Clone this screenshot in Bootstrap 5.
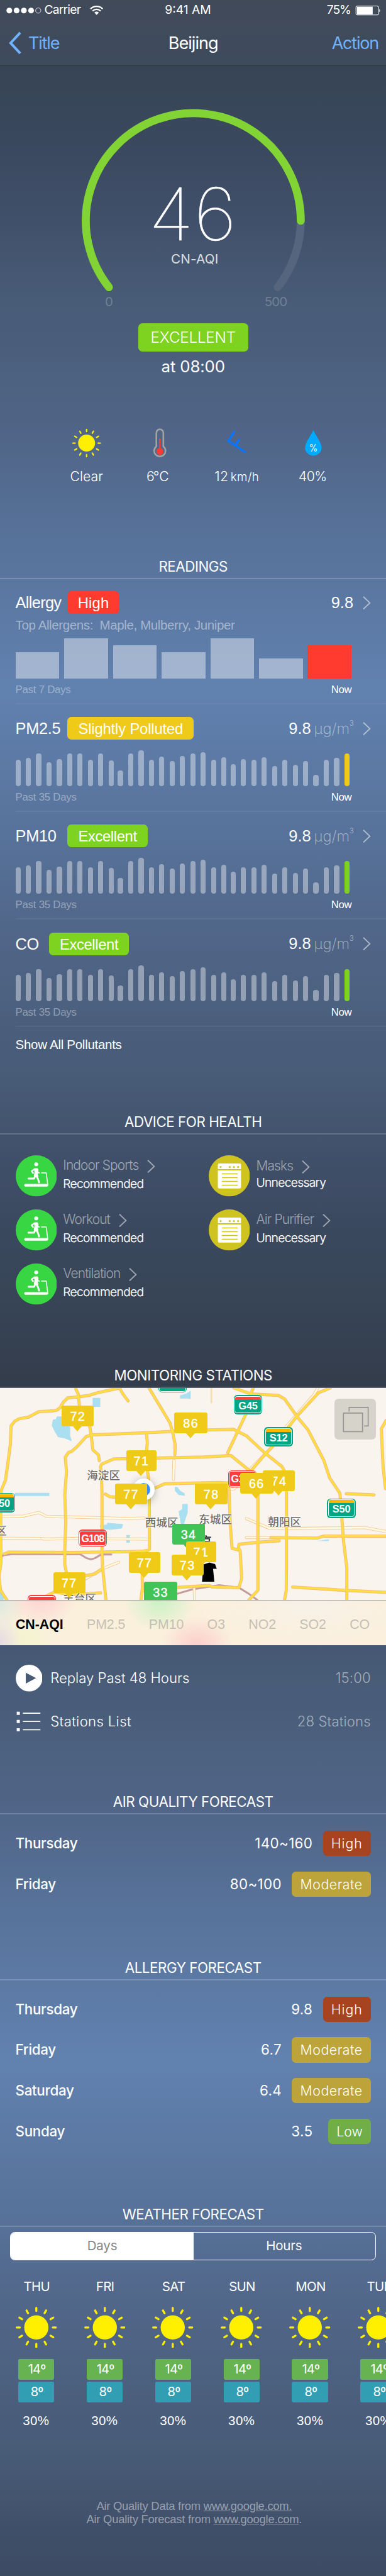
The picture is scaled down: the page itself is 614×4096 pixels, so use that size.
<!DOCTYPE html>
<html lang="en">
<head>
<meta charset="utf-8">
<meta name="viewport" content="width=device-width, initial-scale=1">
<title>Beijing air quality</title>
<link href="https://cdn.jsdelivr.net/npm/bootstrap@5.3.0/dist/css/bootstrap.min.css" rel="stylesheet">
<style>
/* 1rem = 10 design pixels */
html{font-size:8.192px}
body{margin:0;overflow-x:hidden;color:#fff;font-family:"Inter","Noto Sans CJK SC",sans-serif;font-weight:400;line-height:1;
 background:linear-gradient(#343d4c 0,#374455 13rem,#3b4960 30rem,#41506a 43rem,#475a75 56rem,#506587 84rem,#59759e 110rem,#6181af 133.5rem,#59759e 157.5rem,#506587 183rem,#475a75 211rem,#41506a 224rem,#3b4960 237rem,#374455 254rem,#343d4c 267rem,#343d4c 269rem,#3b4960 297rem,#41506a 310rem,#475a75 323rem,#506587 351rem,#59759e 375rem,#6181af 400rem,#59759e 424rem,#506587 450rem,#475a75 478rem,#41506a 490rem,#3c4b62 500rem)}
.screen{width:75rem;min-height:4096px;overflow:hidden}
svg{display:block;flex:none}
.helv{font-family:"Liberation Sans",Arial,sans-serif}
.topbar{height:12.8rem;background:linear-gradient(#414a59,#3e4b5d);border-bottom:.15rem solid #2c3743}
.status{height:4.2rem;line-height:3.85rem;font-size:2.35rem}
.status .carrier{letter-spacing:-.04em}
.status .pct{letter-spacing:-.055em}
.navrow{height:8.45rem;line-height:8.6rem;font-size:3.3rem;letter-spacing:-.044em}
.navrow a{color:#6fb2ff;text-decoration:none}
.rating{width:21.4rem;height:5.4rem;line-height:5.5rem;border-radius:.8rem;background:#7ed321;font-size:2.95rem;font-weight:300;letter-spacing:-.008em;margin-top:2rem;padding:0}
.at-time{height:5.9rem;line-height:5.9rem;font-size:3.15rem;letter-spacing:-.006em}
.now-grid{display:grid;grid-template-columns:13.7rem 13.7rem 17.3rem 12.1rem;padding-left:9.95rem;margin-top:8.9rem}
.now-grid svg{width:8rem;height:6rem;margin:0 auto 1.5rem}
.now-grid div{height:4rem;line-height:4rem;font-size:2.6rem;font-weight:300;white-space:nowrap}
.now-grid .unit-s{font-size:2.3rem;letter-spacing:.02em;margin-left:-.35rem}
/* the rules are painted at the bottom edge so that their height stays fractional */
.sec-title{height:4.6rem;line-height:4.4rem;font-size:2.73rem;font-weight:400;letter-spacing:-.021em;margin:0;text-align:center;background:linear-gradient(rgba(255,255,255,.2),rgba(255,255,255,.2)) 0 100%/100% .22rem no-repeat}
.reading{margin-left:3rem;padding:2.5rem 3rem .6rem 0;background:linear-gradient(rgba(255,255,255,.06),rgba(255,255,255,.06)) 0 100%/100% .22rem no-repeat;font-family:"Liberation Sans",Arial,sans-serif}
.reading.first{padding-top:2.4rem}
.r-head{height:4.4rem;line-height:4.4rem;font-size:3.1rem}
.r-name{width:10.1rem;letter-spacing:-.012em}
.r-name.tight{letter-spacing:-.027em}
.r-name.short{width:6.5rem}
.lvl{height:4.4rem;line-height:4.6rem;font-size:2.9rem;font-weight:400;padding:0 2.1rem;border-radius:.8rem;letter-spacing:-.006em}
.lvl.red{background:#ff3b30;padding:0 2rem;letter-spacing:.011em}.lvl.yel{background:#f0ca18}.lvl.grn{background:#7ed321;letter-spacing:-.015em}
.r-unit{font-family:Inter,sans-serif;font-weight:200;font-size:2.9rem;color:rgba(255,255,255,.5);margin-left:.6rem}
.r-unit sup{font-size:1.35rem;font-weight:300;vertical-align:1.6rem;line-height:0;position:static}
.chev{width:1.6rem;height:2.6rem;fill:none;stroke:rgba(255,255,255,.5);stroke-width:2.4}
.allergens{height:2.9rem;line-height:2.9rem;margin-top:.7rem;font-size:2.5rem;letter-spacing:-.018em;color:rgba(255,255,255,.46);white-space:pre}
.week-bars{height:8.9rem;gap:.96rem}
.week-bars i{width:8.5rem;background:rgba(255,255,255,.42)}
.week-bars i.now{background:#ff3b30}
.month-bars{height:9rem;gap:1.01rem}
.month-bars i{width:1rem;border-radius:.5rem;background:rgba(255,255,255,.4)}
.month-bars i.near{margin-left:-.2rem}
.month-bars i.yel{background:#f0ca18}.month-bars i.grn{background:#7ed321}
.r-foot{height:4.4rem;line-height:4.4rem;font-size:2.05rem;letter-spacing:-.014em;width:65.3rem}
.r-foot span:first-child{color:rgba(255,255,255,.4)}
.show-all{height:6.8rem;line-height:6.8rem;padding-left:3rem;font-size:2.5rem;letter-spacing:-.013em;margin-bottom:9.4rem}
.advice{padding:4.1rem 0 0 3rem;margin-bottom:9rem}
.advice .item{height:8rem;margin-bottom:2.5rem}
.advice .icon{width:8rem;height:8rem;margin-right:1.25rem}
.adv-name{height:3.7rem;line-height:3.7rem;font-size:2.55rem;font-weight:300;letter-spacing:-.041em;color:rgba(255,255,255,.5);margin-top:.1rem}
.adv-name .chev{margin-left:1.7rem;margin-top:.3rem}
.adv-sub{height:3.5rem;line-height:3.5rem;font-size:2.35rem;font-weight:300;-webkit-text-stroke:.03rem #fff;letter-spacing:-.036em}
.tight-lines .adv-name{margin-top:.4rem;height:3.4rem;line-height:3.4rem}
.tight-lines .adv-sub{height:3.1rem;line-height:3.1rem}
.map{height:41.2rem;background:#f9f5ee;overflow:hidden}
.map svg.roads{width:75rem;height:41.2rem}
.roads path{fill:none;vector-effect:non-scaling-stroke;stroke-linejoin:round;stroke-linecap:round}
.roads .area path,.roads path.area{fill:inherit}
.roads .edge{stroke:#f5bc80;stroke-width:5px}.roads .core{stroke:#ffde3f;stroke-width:3.1px}
.roads .edge2{stroke:#f4c796;stroke-width:4.6px}.roads .core2{stroke:#fffbe0;stroke-width:2.8px}
.pin{position:absolute;height:4.03rem;border-radius:.4rem;background:#f0ca18;font:400 2.4rem/4.3rem "Liberation Sans",sans-serif;-webkit-text-stroke:.05rem #fff;letter-spacing:.07em;text-align:center}
.pin::after{content:"";position:absolute;left:50%;top:4rem;margin-left:-.95rem;border:.95rem solid transparent;border-top:1rem solid #f0ca18;border-bottom:0}
.pin.ok{background:#40c456}.pin.ok::after{border-top-color:#40c456}
.shield{position:absolute;width:5.55rem;height:3.75rem;border-radius:.7rem;background:#00a584;padding:.18rem}
.shield b{display:block;height:100%;border:.2rem solid #fff;border-radius:.55rem;background:linear-gradient(#ffb400 .6rem,#00a584 .6rem);font:700 2rem/3.5rem "Liberation Sans",sans-serif;text-align:center;white-space:nowrap;letter-spacing:-.01em}
.shield.g b{background:linear-gradient(#ff4438 .6rem,#00a584 .6rem)}
.shield.n{background:#ff3b3b;height:3.35rem}.shield.n b{background:#ff3b3b;line-height:2.75rem;letter-spacing:-.06em}
.place{position:absolute;font:500 2.15rem/2.2rem "Noto Sans CJK SC",sans-serif;color:#716d69;white-space:nowrap;text-shadow:0 0 .2rem #fff,0 0 .2rem #fff,0 0 .3rem #fff}
.place.city{color:#222}
.locator{position:absolute;left:25.7rem;top:17.6rem;width:4.3rem;height:4.3rem;border-radius:50%;background:#3a8ef5;border:.95rem solid #fff;box-shadow:0 .3rem 1.6rem rgba(0,0,0,.3)}
.layers{position:absolute;left:65rem;top:2.1rem;width:8rem;height:8rem;border-radius:.8rem;background:#d6d3cb}
.map-tabs{height:8.8rem;line-height:9.5rem;padding:0 3.2rem 0 3.05rem;border-top:.1rem solid #a5a29b;font-size:2.6rem;color:#c6c0b3;background:
 radial-gradient(7rem 6rem at 8rem -1rem,#fdd0d3,transparent),radial-gradient(7rem 6rem at 31rem 0,#c9f2c4,transparent),radial-gradient(7rem 6rem at 38.3rem 9rem,#fccbcb,transparent),radial-gradient(5rem 6rem at 0 0,#dde9e0,transparent),radial-gradient(4rem 5rem at 0 8rem,#e6dbe2,transparent),radial-gradient(5rem 5rem at 5rem 8rem,#f3f4cd,transparent),radial-gradient(22rem 9rem at 60rem 0,#f7f1e8,transparent),#fbf0dc}
.map-tabs .active{color:#000;font-weight:700}
.links{padding:2.2rem 3rem 0;margin-bottom:9.2rem}
.links .line{height:8.4rem;font-size:2.7rem;font-weight:300}
.links .line svg{width:5.2rem;height:5.2rem;margin-right:1.6rem}
.links .dim{color:rgba(255,255,255,.5);letter-spacing:.007em}
.fc{padding:1.7rem 3rem 0}
.fc .line{height:7.9rem;font-size:2.73rem}
.fc .day{font-weight:500;letter-spacing:-.014em}
.fc .num{letter-spacing:.017em;margin-right:2rem}
.fc .lo{margin-right:3rem}
.tag{height:4.9rem;line-height:5rem;border-radius:.8rem;font-size:2.6rem;font-weight:300;letter-spacing:.026em;padding:0 1.6rem;background:#bda43a}
.tag.hi{background:#a8431f;letter-spacing:.045em}.tag.low{background:#71ae48;letter-spacing:0}
.seg{width:71rem;height:5.5rem;margin:1rem 0 0 2rem;border:.2rem solid #fff;border-radius:.9rem;overflow:hidden}
.seg .btn{border:0;border-radius:0;padding:0;font-size:2.5rem;line-height:5rem;color:#fff;letter-spacing:-.01em;width:50%;background:none}
.seg .btn.active{background:#fff;color:#868686}
.days{margin:3.2rem 0 0 .35rem;width:100rem}
.days .day-col{width:13.3rem;flex:none;text-align:center;font-size:2.5rem}
.days .dname{height:4rem;line-height:4rem;letter-spacing:-.035em;padding-left:.2rem}
.days svg{width:8rem;height:8rem;margin:1.8rem auto 2.2rem}
.days .deg{width:7rem;height:4rem;line-height:4rem;margin:0 auto .4rem;border-radius:.3rem;background:#67b352;font-size:2.45rem;letter-spacing:-.04em;padding-left:.3rem}
.days .deg.cold{background:#319eb3}
.days .rain{height:4rem;line-height:4rem;margin-top:1.6rem;letter-spacing:.02em}
.credits{margin-top:13.2rem;font-size:2.25rem;line-height:2.6rem;letter-spacing:-.014em;text-align:center;color:rgba(255,255,255,.46);padding-left:.4rem}
.credits a{color:inherit;text-decoration:underline;text-underline-offset:.15rem}
</style>
</head>
<body>
<svg width="0" height="0" class="position-absolute">
 <defs>
  <symbol id="sun" viewBox="0 0 80 80"><circle cx="40" cy="40" r="23.5" fill="#fff000"/><g stroke="#fff000" stroke-width="4" stroke-linecap="round"><path d="M40 2v6M40 72v6M2 40h6M72 40h6"/><path d="M40 2v6M40 72v6M2 40h6M72 40h6" transform="rotate(30 40 40)"/><path d="M40 2v6M40 72v6M2 40h6M72 40h6" transform="rotate(60 40 40)"/></g></symbol>
  <symbol id="run" viewBox="0 0 80 80"><circle cx="40" cy="40" r="40" fill="#38d643"/><g fill="none" stroke="#fff" stroke-linecap="round" stroke-linejoin="round"><circle cx="39.8" cy="17.4" r="3.8" fill="#fff" stroke="none"/><path d="M36.4 26.2L42 26l1.2 3-1.4 6.5 1.2 5-5.6 .5-1.3-1.5 1.4-7z" fill="#fff" stroke-width="2"/><path d="M36.5 26.8L31 30.5l2.600 4" stroke-width="3"/><path d="M41.8 30l1 3.2 2.600 1" stroke-width="2.4"/><path d="M38 40.5l-2.5 4.7H24.8" stroke-width="3.6"/><path d="M40.5 40l3 6.5L45.3 52.5" stroke-width="3.6"/><path d="M50 34.2h9.2l2.9 22" stroke-width="1.9"/><path d="M19 58h41.5" stroke-width="5.2"/></g></symbol>
  <symbol id="box" viewBox="0 0 80 80"><circle cx="40" cy="40" r="40" fill="#cfc41f"/><path d="M20.5 16h39.5a2.7 2.7 0 0 1 2.7 2.7V27H17.8v-8.3A2.7 2.7 0 0 1 20.5 16zM17.8 29.2h44.9v32.600a2.7 2.7 0 0 1-2.7 2.7H20.5a2.7 2.7 0 0 1-2.7-2.7z" fill="#fff"/><g fill="#cfc41f"><circle cx="23.2" cy="22.7" r="2"/><circle cx="40.8" cy="22.7" r="2"/><circle cx="48.9" cy="22.7" r="2"/><circle cx="57.1" cy="22.7" r="2"/></g><path d="M25.8 36h30.5M25.8 43.3h30.5M25.8 50.7h30.5M25.8 58h30.5" stroke="#cfc41f" stroke-width="2"/></symbol>
  <symbol id="chev" viewBox="0 0 16 26"><path d="M1.2 1l12.6 12L1.2 25"/></symbol>
 </defs>
</svg>
<div class="screen">
 <header class="topbar">
  <div class="status row g-0">
   <div class="col-4 d-flex">
    <svg viewBox="0 0 88 42" style="width:8.6rem;height:4.2rem"><g fill="#fff"><circle cx="18.5" cy="20.4" r="5.7"/><circle cx="33" cy="20.4" r="5.7"/><circle cx="47.4" cy="20.4" r="5.7"/><circle cx="61.8" cy="20.4" r="5.7"/></g><circle cx="76" cy="20.4" r="5.2" fill="none" stroke="#fff"/></svg>
    <span class="carrier">Carrier</span>
    <svg viewBox="0 0 26 42" style="width:2.6rem;height:4.2rem;margin-left:1.8rem"><g fill="none" stroke="#fff" stroke-width="2.8"><path d="M1.2 17.3a16.5 16.5 0 0 1 23.6 0M5.2 21.4a11 11 0 0 1 15.600 0"/></g><path d="M13 29l-4.3-4.6a6 6 0 0 1 8.600 0z" fill="#fff"/></svg>
   </div>
   <div class="col-4 text-center" style="padding-right:2rem">9:41 AM</div>
   <div class="col-4 d-flex justify-content-end"><span class="pct">75%</span><svg viewBox="0 0 60 42" style="width:6rem;height:4.2rem;margin-left:.9rem"><rect x="1.5" y="11.7" width="43.5" height="17.4" rx="2.6" fill="none" stroke="#fff" stroke-width="1.3"/><rect x="3.5" y="13" width="30.5" height="14.8" fill="#fff"/><path d="M46.7 17.3a4.8 4.8 0 0 1 0 6.600z" fill="#fff"/></svg></div>
  </div>
  <nav class="navrow row g-0">
   <a class="col-4 d-flex align-items-center" href="#"><svg viewBox="0 0 56 86" style="width:5.5rem;height:8.6rem"><path d="M40 21.5L21 42l19 20.5" fill="none" stroke="#6fb2ff" stroke-width="5"/></svg>Title</a>
   <div class="col-4 text-center" style="letter-spacing:-.035em">Beijing</div>
   <a class="col-4 text-end" href="#" style="padding-right:1.5rem">Action</a>
  </nav>
 </header>

 <svg viewBox="0 128 750 480" style="width:75rem;height:48rem">
  <g fill="none" stroke-width="15.5" stroke-linecap="round"><path d="M584 428.3A208.7 208.7 0 0 1 539.3 557.3" stroke="#56657e"/><path d="M211.4 557.3A208.7 208.7 0 1 1 584 428.3" stroke="#82d334"/></g>
  <g fill="#fff"><text x="288.5" y="466" font-size="141" font-weight="100" textLength="171" lengthAdjust="spacingAndGlyphs" stroke="#fff" stroke-width=".7">46</text><text x="332" y="511.3" font-size="25.3" opacity=".8" letter-spacing=".2">CN-AQI</text><text x="204" y="594" font-size="25" opacity=".22">0</text><text x="513.5" y="594" font-size="25" opacity=".22" letter-spacing="-1">500</text></g>
 </svg>
 <div class="d-flex flex-column align-items-center"><span class="badge rating">EXCELLENT</span><div class="at-time">at 08:00</div></div>

 <div class="now-grid text-center">
  <section><svg viewBox="0 0 80 60"><use href="#sun" x="12" y="2" width="56" height="56"/></svg><div>Clear</div></section>
  <section><svg viewBox="-5.5 0 80 60"><path d="M33.2 10a6.800 6.800 0 0 1 13.6 0V36.3a11 11 0 1 1-13.6 0z" fill="none" stroke="#a2a2a2" stroke-width="3.2"/><circle cx="40" cy="46" r="6.6" fill="#ff3b30"/><path d="M40 21v22" stroke="#ff3b30" stroke-width="3"/></svg><div style="letter-spacing:-.1em">6℃</div></section>
  <section><svg viewBox="3.5 0 80 60"><path d="M39 7L27 25.7 60.5 48M48.5 22l-9 14" fill="none" stroke="#0a75ff" stroke-width="4.2"/></svg><div><span style="letter-spacing:.02em">12</span> <span class="unit-s">km/h</span></div></section>
  <section><svg viewBox="-2 0 80 60"><path d="M40 4.5C44 15 56 28 56 39a16 15.4 0 0 1-32 0C24 28 36 15 40 4.5z" fill="#00aaff"/><text x="40" y="46" font-size="19" fill="#fff" text-anchor="middle" textLength="16.5" lengthAdjust="spacingAndGlyphs">%</text></svg><div style="letter-spacing:-.026em">40%</div></section>
 </div>

 <h2 class="sec-title" style="margin-top:13.3rem">READINGS</h2>
 <div id="readings"></div>
 <div class="show-all helv">Show All Pollutants</div>

 <h2 class="sec-title">ADVICE FOR HEALTH</h2>
 <div class="advice row g-0" id="advice"></div>

 <h2 class="sec-title">MONITORING STATIONS</h2>
 <div class="map position-relative" id="map">
  <svg class="roads" viewBox="0 462 1568 1236" preserveAspectRatio="none">
   <g fill="#a9dff1" class="area"><path d="M376 520h31v52h-31zM232 628h18l35 62v50l7 32-30-17-27-7-15-38-10-30 5-35 10 0zM731 505l25-10 18-17v49l-10-4h-33zM60 1073h140v18H60zM709 1038l12 2 10 20 19 15v15l-25-5-15-25zM740 1138h22v50l-17 72h-10l-10-80 15-12zM405 1262l30-5 0-10 30 3 35 5-5 25-45 8-40-4zM513 1318h14v45h-14zM1285 1353l50-10v10z"/><path d="M0 1600l15 60v38H0z"/></g>
   <path class="area" d="M825 1490l25-12 23 9 7 28h-15l5 75h-50l5-80z" fill="#c3e6b1"/>
   <g id="roads"></g>
  </svg>
  <div class="locator"></div>
  <div class="layers"><svg viewBox="0 0 80 80" style="width:8rem;height:8rem" fill="none" stroke="#969594" stroke-width="2"><path d="M17.5 28h37v36h-37zM28.5 25v-8h37v36h-8"/></svg></div>
 </div>
 <div class="map-tabs helv d-flex justify-content-between"><span class="active">CN-AQI</span><span>PM2.5</span><span>PM10</span><span>O3</span><span>NO2</span><span>SO2</span><span>CO</span></div>

 <div class="links">
  <div class="line d-flex align-items-center"><svg viewBox="0 0 52 52"><path fill-rule="evenodd" d="M26 0a26 26 0 1 0 0 52 26 26 0 0 0 0-52zM19.5 15.5L39.5 26 19.5 36.5z" fill="#fff"/></svg><span class="me-auto">Replay Past 48 Hours</span><span class="dim">15:00</span></div>
  <div class="line d-flex align-items-center"><svg viewBox="0 0 52 52" fill="#fff"><path d="M2 7h6v6H2zM2 23h6v6H2zM2 39h6v6H2zM14 9h34v2H14zM14 25h34v2H14zM14 41h34v2H14z"/></svg><span class="me-auto" style="letter-spacing:.016em">Stations List</span><span class="dim">28 Stations</span></div>
 </div>

 <h2 class="sec-title">AIR QUALITY FORECAST</h2>
 <div class="fc">
  <div class="line d-flex align-items-center"><span class="day me-auto">Thursday</span><span class="num">140~160</span><span class="badge tag hi">High</span></div>
  <div class="line d-flex align-items-center"><span class="day me-auto">Friday</span><span class="num">80~100</span><span class="badge tag">Moderate</span></div>
 </div>

 <h2 class="sec-title" style="margin-top:10.1rem">ALLERGY FORECAST</h2>
 <div class="fc">
  <div class="line d-flex align-items-center"><span class="day me-auto">Thursday</span><span class="num">9.8</span><span class="badge tag hi">High</span></div>
  <div class="line d-flex align-items-center"><span class="day me-auto">Friday</span><span class="num">6.7</span><span class="badge tag">Moderate</span></div>
  <div class="line d-flex align-items-center"><span class="day me-auto">Saturday</span><span class="num">6.4</span><span class="badge tag">Moderate</span></div>
  <div class="line d-flex align-items-center"><span class="day me-auto">Sunday</span><span class="num lo">3.5</span><span class="badge tag low">Low</span></div>
 </div>

 <h2 class="sec-title" style="margin-top:10rem">WEATHER FORECAST</h2>
 <div class="seg btn-group d-flex"><button class="btn active">Days</button><button class="btn">Hours</button></div>
 <div class="days d-flex" id="days"></div>

 <footer class="credits helv">Air Quality Data from <a href="#">www.google.com.</a><br>Air Quality Forecast from <a href="#">www.google.com</a>.</footer>
</div>

<script>
const byId = id => document.getElementById(id);
const chev = '<svg class="chev"><use href="#chev"/></svg>';

// Readings: 7 daily columns for allergy, 33 slim bars for each pollutant
const week = [51,78,64,51,78,39,64];
const month = [51,55,63,46,53,63,63,51,63,50,31,63,70,51,57,49,59,63,66,51,56,43,52,51,56,39,51,41,49,22,51,55,63];
const bar = (h, cls) => `<i class="${cls}" style="height:${h / 10}rem"></i>`;
const foot = n => `<div class="r-foot d-flex justify-content-between"><span>Past ${n} Days</span><span>Now</span></div>`;
byId('readings').innerHTML = `
 <div class="reading first">
  <div class="r-head d-flex align-items-center"><span class="r-name tight">Allergy</span><span class="badge lvl red">High</span><span class="ms-auto" style="margin-right:1.8rem">9.8</span>${chev}</div>
  <div class="allergens">Top Allergens:  Maple, Mulberry, Juniper</div>
  <div class="week-bars d-flex align-items-end">${week.map((h, i) => bar(h, i === 6 ? 'now' : '')).join('')}</div>${foot(7)}
 </div>` + [['PM2.5','Slightly Polluted','yel',''],['PM10','Excellent','grn',''],['CO','Excellent','grn','short']].map(([name, lvl, tone, w]) => `
 <div class="reading">
  <div class="r-head d-flex align-items-center"><span class="r-name ${w}">${name}</span><span class="badge lvl ${tone}">${lvl}</span><span class="ms-auto" style="margin-right:1.7rem">9.8<span class="r-unit">µg/m<sup>3</sup></span></span>${chev}</div>
  <div class="month-bars d-flex align-items-end">${month.map((h, i) => bar(h, (i === 10 || i === 21 ? 'near ' : '') + (i === 32 ? tone : ''))).join('')}</div>${foot(35)}
 </div>`).join('');

// Health advice
byId('advice').innerHTML = [['run','Indoor Sports','Recommended'],['box','Masks','Unnecessary','tight-lines'],['run','Workout','Recommended'],['box','Air Purifier','Unnecessary'],['run','Ventilation','Recommended']].map(([icon, name, sub, cls = '']) => `
 <div class="item d-flex ${cls}" style="width:${icon === 'run' ? 37.5 : 34}rem"><svg class="icon"><use href="#${icon}"/></svg><div><div class="adv-name d-flex align-items-center">${name}${chev}</div><div class="adv-sub">${sub}</div></div></div>`).join('');

// Map: roads
const major = ['485,462 395,490 362,505 320,513 275,520 258,543 245,575 232,590 212,596 157,600 115,632 80,640 60,655 45,682 42,790 33,890 22,1000 5,1058 3,1170 3,1240 4,1480 -4,1560 2,1640 28,1697',
'308,468 317,495 323,570 365,690 370,735 377,822 400,852 403,885','485,462 498,495 520,537',
'270,1540 263,1490 263,1400 267,1240 263,1080 270,950 265,865 278,838 292,830 312,805 350,745 370,735 528,727 700,715 845,706 948,703 1000,740 1075,840 1145,920 1160,960 1163,1080 1163,1500 1162,1640 1155,1697',
'605,462 690,665 700,715 711,790 710,850','430,1697 416,1500 414,1400 414,1080 412,970 408,920 413,905 462,875 512,874 830,864 937,855 1010,940',
'595,730 598,780 595,830 598,940 603,990 606,1100 607,1400 600,1408 578,1412 577,1530 578,1625 572,1697','578,1640 610,1650',
'720,1623 850,1612 860,1620 970,1625 981,1570 975,1410 968,1395 970,1372 1048,1360 1133,1352','968,1405 942,1396 935,1260 930,1060 925,1015',
'606,1060 668,1020 890,1012 930,1016','428,1080 445,1095 470,1098','1028,462 1018,497','998,615 965,715 925,838',
'950,462 1020,497 1130,505 1155,525 1205,627 1250,705 1315,885 1338,985 1380,1075 1384,1150 1395,1360 1408,1510 1408,1697',
'1340,462 1293,490 1205,627 1170,692 1105,805 1075,850 1010,960','1568,650 1548,700 1555,920 1565,1048','1406,1077 1518,1085',
'1047,1060 1047,1640 1010,1697','1100,1333 1290,1335 1315,1324 1568,1324','18,1428 35,1418 300,1420 520,1415 578,1412',
'345,1555 385,1545 415,1515','180,1680 220,1650 290,1665 408,1655','1188,1621 1400,1640 1520,1649 1568,1652'];
const minor = ['1290,462 1275,500 1160,690','1100,810 1005,950','1000,1333 1100,1333','1000,1222 1090,1277 1180,1280 1480,1275 1568,1298',
'0,1210 95,1208 158,1187 188,1209 265,1212 515,1222 585,1219','0,1337 175,1338 178,1342 410,1335 440,1340 600,1342','706,883 704,995','788,1620 790,1697','345,1575 415,1515 482,1477','930,1050 950,1050 965,1030'];
const rails = ['0,1455 15,1435 50,1430 325,1430 350,1452 370,1460 385,1453 410,1432 452,1432','720,1660 780,1635 890,1610 970,1625 1010,1660 1045,1697'];
const P = (list, attr) => list.map(p => `<path ${attr} d="M${p.split(' ').join('L')}"/>`).join('');
byId('roads').innerHTML = P(rails, 'style="stroke:#c29c9b;stroke-width:3px"') + '<path d="M858 462V547" style="stroke:#f6dca8;stroke-width:2.5px"/>' + P(minor, 'class="edge2"') + P(minor, 'class="core2"') + P(major, 'class="edge"') + P(major, 'class="core"');

// Map: labels, shields and pins, placed on the map's own grid
const at = (x, y) => `left:${(x / 20.907).toFixed(2)}rem;top:${((y - 462) / 30).toFixed(2)}rem`;
const places = [['海淀区',353,935],['西城区',589,1209],['东城区',807,1192],['朝阳区',1088,1207],['丰台区',256,1652],['区',-18,1257],['北京',770,1318,'city']];
const shields = [['G45',949,505,'g'],['S12',1073,691],['S50',1328,1108],['S50',-54,1075],['S11',642,378],['G108',318,1288,'n'],['G101',926,943,'n'],['G107',112,1669,'n']];
const pins = [[72,251,568,381],[86,707,606,843],[71,512,826,636],[77,468,1021,597],[78,792,1022,924],[74,1068,942,1198],[66,974,958,1110],[34,698,1255,833,'ok'],[71,755,1357,878],[73,696,1434,826],[77,523,1420,651],[77,217,1537,346],[33,585,1591,719,'ok']];
byId('map').insertAdjacentHTML('beforeend',
 places.map(([t, x, y, c = '']) => `<span class="place ${c}" style="${at(x, y)}">${t}</span>`).join('') +
 shields.map(([t, x, y, c = '']) => `<span class="shield ${c}" style="${at(x, y)}"><b>${t}</b></span>`).join('') +
 pins.map(([t, x, y, x2, c = '']) => `<span class="pin ${c}" style="${at(x, y)};width:${((x2 - x) / 20.907).toFixed(2)}rem">${t}</span>`).join(''));

// Weather forecast columns
byId('days').innerHTML = ['THU','FRI','SAT','SUN','MON','TUE'].map(d => `<div class="day-col"><div class="dname">${d}</div><svg><use href="#sun"/></svg><div class="deg">14º</div><div class="deg cold">8º</div><div class="rain helv">30%</div></div>`).join('');
</script>
<script src="https://cdn.jsdelivr.net/npm/bootstrap@5.3.0/dist/js/bootstrap.bundle.min.js"></script>
</body>
</html>
